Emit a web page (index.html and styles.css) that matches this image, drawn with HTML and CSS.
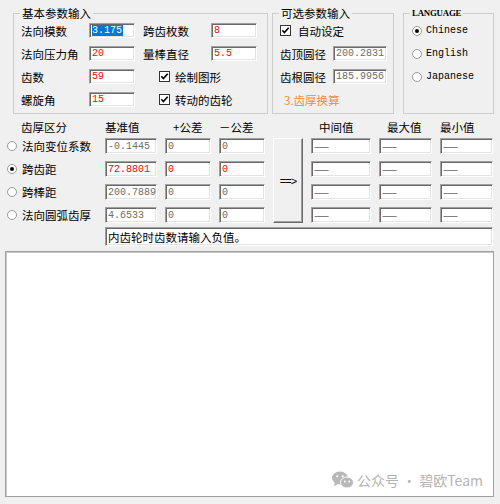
FILE: index.html
```html
<!DOCTYPE html>
<html lang="zh-CN">
<head>
    <meta charset="UTF-8">
    <meta name="viewport" content="width=device-width, initial-scale=1.0">
    <title>齿厚换算</title>
    <link rel="stylesheet" href="styles.css">
</head>
<body>
<div class="app">
    <div class="top">
        <fieldset class="group basic">
            <legend>基本参数输入</legend>
            <div class="grid">
                <span class="lbl">法向模数</span><div class="field"><span class="sel">3.175</span></div>
                <span class="lbl lbl2">跨齿枚数</span><div class="field red">8</div>
                <span class="lbl">法向压力角</span><div class="field red">20</div>
                <span class="lbl lbl2">量棒直径</span><div class="field red">5.5</div>
                <span class="lbl">齿数</span><div class="field red">59</div>
                <label class="check wide"><svg class="box" width="11" height="11" viewBox="0 0 11 11"><rect x="0.5" y="0.5" width="10" height="10" fill="#fff" stroke="#333"/><path d="M2.3 5.3 L4.4 7.6 L8.7 2.8" fill="none" stroke="#000" stroke-width="1.6"/></svg>绘制图形</label>
                <span class="lbl">螺旋角</span><div class="field red">15</div>
                <label class="check wide"><svg class="box" width="11" height="11" viewBox="0 0 11 11"><rect x="0.5" y="0.5" width="10" height="10" fill="#fff" stroke="#333"/><path d="M2.3 5.3 L4.4 7.6 L8.7 2.8" fill="none" stroke="#000" stroke-width="1.6"/></svg>转动的齿轮</label>
            </div>
        </fieldset>

        <fieldset class="group optional">
            <legend>可选参数输入</legend>
            <div class="grid">
                <label class="check auto"><svg class="box" width="11" height="11" viewBox="0 0 11 11"><rect x="0.5" y="0.5" width="10" height="10" fill="#fff" stroke="#333"/><path d="M2.3 5.3 L4.4 7.6 L8.7 2.8" fill="none" stroke="#000" stroke-width="1.6"/></svg>自动设定</label>
                <span class="lbl">齿顶圆径</span><div class="field gray">200.2831</div>
                <span class="lbl">齿根圆径</span><div class="field gray">185.9956</div>
                <span class="link">3.齿厚换算</span>
            </div>
        </fieldset>

        <fieldset class="group lang">
            <legend>LANGUAGE</legend>
            <div class="list">
                <label class="opt"><i class="radio on"></i>Chinese</label>
                <label class="opt"><i class="radio"></i>English</label>
                <label class="opt"><i class="radio"></i>Japanese</label>
            </div>
        </fieldset>
    </div>

    <div class="thick">
        <span class="hd first">齿厚区分</span>
        <span class="hd">基准值</span>
        <span class="hd pad">+公差</span>
        <span class="hd">－公差</span>
        <span></span>
        <span class="hd pad">中间值</span>
        <span class="hd pad">最大值</span>
        <span class="hd">最小值</span>

        <label class="opt"><i class="radio"></i>法向变位系数</label>
        <div class="field gray">-0.1445</div><div class="field gray">0</div><div class="field gray">0</div>
        <button class="go">==&gt;</button>
        <div class="field"><span class="dash">——</span></div><div class="field"><span class="dash">——</span></div><div class="field"><span class="dash">——</span></div>

        <label class="opt"><i class="radio on"></i>跨齿距</label>
        <div class="field red">72.8801</div><div class="field red">0</div><div class="field red">0</div>
        <div class="field"><span class="dash">——</span></div><div class="field"><span class="dash">——</span></div><div class="field"><span class="dash">——</span></div>

        <label class="opt"><i class="radio"></i>跨棒距</label>
        <div class="field gray">200.7889</div><div class="field gray">0</div><div class="field gray">0</div>
        <div class="field"><span class="dash">——</span></div><div class="field"><span class="dash">——</span></div><div class="field"><span class="dash">——</span></div>

        <label class="opt"><i class="radio"></i>法向圆弧齿厚</label>
        <div class="field gray">4.6533</div><div class="field gray">0</div><div class="field gray">0</div>
        <div class="field"><span class="dash">——</span></div><div class="field"><span class="dash">——</span></div><div class="field"><span class="dash">——</span></div>

        <div class="field msg">内齿轮时齿数请输入负值。</div>
    </div>

    <div class="out">
        <div class="wm">
            <svg width="22" height="18" viewBox="0 0 22 18"><ellipse cx="8" cy="7" rx="8" ry="6.5" fill="#b8b8b8"/><path d="M3 11 L2 15.5 L6.5 12.5Z" fill="#b8b8b8"/><circle cx="5.3" cy="5.3" r="1.1" fill="#fff"/><circle cx="10.7" cy="5.3" r="1.1" fill="#fff"/><ellipse cx="15" cy="11.5" rx="6.5" ry="5.5" fill="#b8b8b8" stroke="#fff" stroke-width="1"/><circle cx="12.8" cy="10.5" r="0.9" fill="#fff"/><circle cx="17.2" cy="10.5" r="0.9" fill="#fff"/></svg>
            <span>公众号 · 碧欧Team</span>
        </div>
    </div>
</div>
</body>
</html>
```

FILE: styles.css
```css
body { margin: 0; background: #f0f0f0; color: #000; font-family: "Noto Sans CJK SC", sans-serif; font-size: 11.5px; }
.app { width: 500px; height: 504px; }

/* top group boxes */
.top { display: flex; padding: 6px 0 0 13px; }
.group { box-sizing: border-box; height: 108px; margin: 0; padding: 3px 0 0; border: 1px solid #cdcdcd; min-width: 0; }
.group legend { margin-left: 6px; padding: 0 2px; line-height: 14px; }
.basic { width: 255px; }
.optional { width: 122px; margin-left: 4px; }
.lang { width: 91px; margin-left: 9px; }
.lang legend { font-family: "Liberation Serif", serif; font-size: 8.8px; font-weight: bold; letter-spacing: -0.2px; }

.grid { display: grid; grid-auto-rows: 15px; row-gap: 8px; padding-left: 7px; align-items: center; }
.basic .grid { grid-template-columns: 68px 46px 76px 46px; }
.optional .grid { grid-template-columns: 53px 54px; }
.lbl { white-space: nowrap; }
.lbl2 { padding-left: 8px; }

.check { display: flex; align-items: center; white-space: nowrap; }
.check .box { flex: none; margin-right: 5px; }
.check.wide { grid-column: 3 / 5; padding-left: 24px; }
.check.auto { grid-column: 1 / 3; }
.check.auto .box { margin-right: 7px; }
.link { grid-column: 1 / 3; padding-left: 4px; color: #f7893b; }

.list { display: grid; grid-auto-rows: 15px; row-gap: 8px; padding-left: 8px; align-items: center; }
.list .opt { font-family: "Liberation Mono", monospace; font-size: 10px; }
.list .radio { margin-left: 0; margin-right: 4px; }

/* sunken edit box */
.field { box-sizing: border-box; align-self: stretch; display: flex; align-items: center; overflow: hidden; white-space: nowrap;
    padding-left: 2px; background: #fff; border: 1px solid; border-color: #a0a0a0 #fff #fff #a0a0a0;
    box-shadow: inset 1px 1px 0 #696969, inset -1px -1px 0 #e3e3e3;
    font-family: "Liberation Mono", monospace; font-size: 10px; }
.red { color: #f00; }
.gray { color: #6d6d6d; }
.sel { background: #0078d7; color: #fff; line-height: 11px; padding-right: 1px; }
.dash { font-family: "Noto Sans CJK SC", sans-serif; font-size: 9px; color: #222; letter-spacing: -1px; }

/* radios */
.opt { display: flex; align-items: center; white-space: nowrap; }
.radio { box-sizing: border-box; flex: none; position: relative; width: 10px; height: 10px; margin: 0 5px 0 2px;
    border: 1px solid #9a9a9a; border-radius: 50%; background: #fff; }
.radio.on::after { content: ""; position: absolute; left: 2px; top: 2px; width: 4px; height: 4px; border-radius: 50%; background: #000; }

/* tooth thickness table */
.thick { display: grid; margin-top: 6px; padding-left: 5px;
    grid-template-columns: 92px 52px 46px 46px 30px 60px 53px 53px;
    grid-template-rows: 11px repeat(4, 16px) 16px; column-gap: 8px; row-gap: 7px; }
.hd { align-self: start; line-height: 14px; white-space: nowrap; }
.hd.first { padding-left: 16px; }
.hd.pad { padding-left: 8px; }
.go { grid-column: 5; grid-row: 2 / span 4; margin: 0; padding: 0; background: #f0f0f0;
    border: 1px solid; border-color: #fff #696969 #696969 #fff; box-shadow: inset -1px -1px 0 #a0a0a0;
    font-family: "Liberation Sans", sans-serif; font-size: 11px; letter-spacing: -1px; color: #000; }
.msg { grid-column: 2 / -1; align-self: start; height: 19px; margin-top: -3px;
    font-family: "Noto Sans CJK SC", sans-serif; font-size: 11.5px; }

/* output text area */
.out { position: relative; box-sizing: border-box; width: 489px; height: 246px; margin: 5px 0 0 5px;
    background: #fff; border: 1px solid #a0a0a0; box-shadow: inset 1px 1px 0 #c8c8c8; }
.wm { position: absolute; right: 10px; bottom: 6px; display: flex; align-items: center; gap: 3px;
    color: #b4b4b4; font-size: 14px; }
```
